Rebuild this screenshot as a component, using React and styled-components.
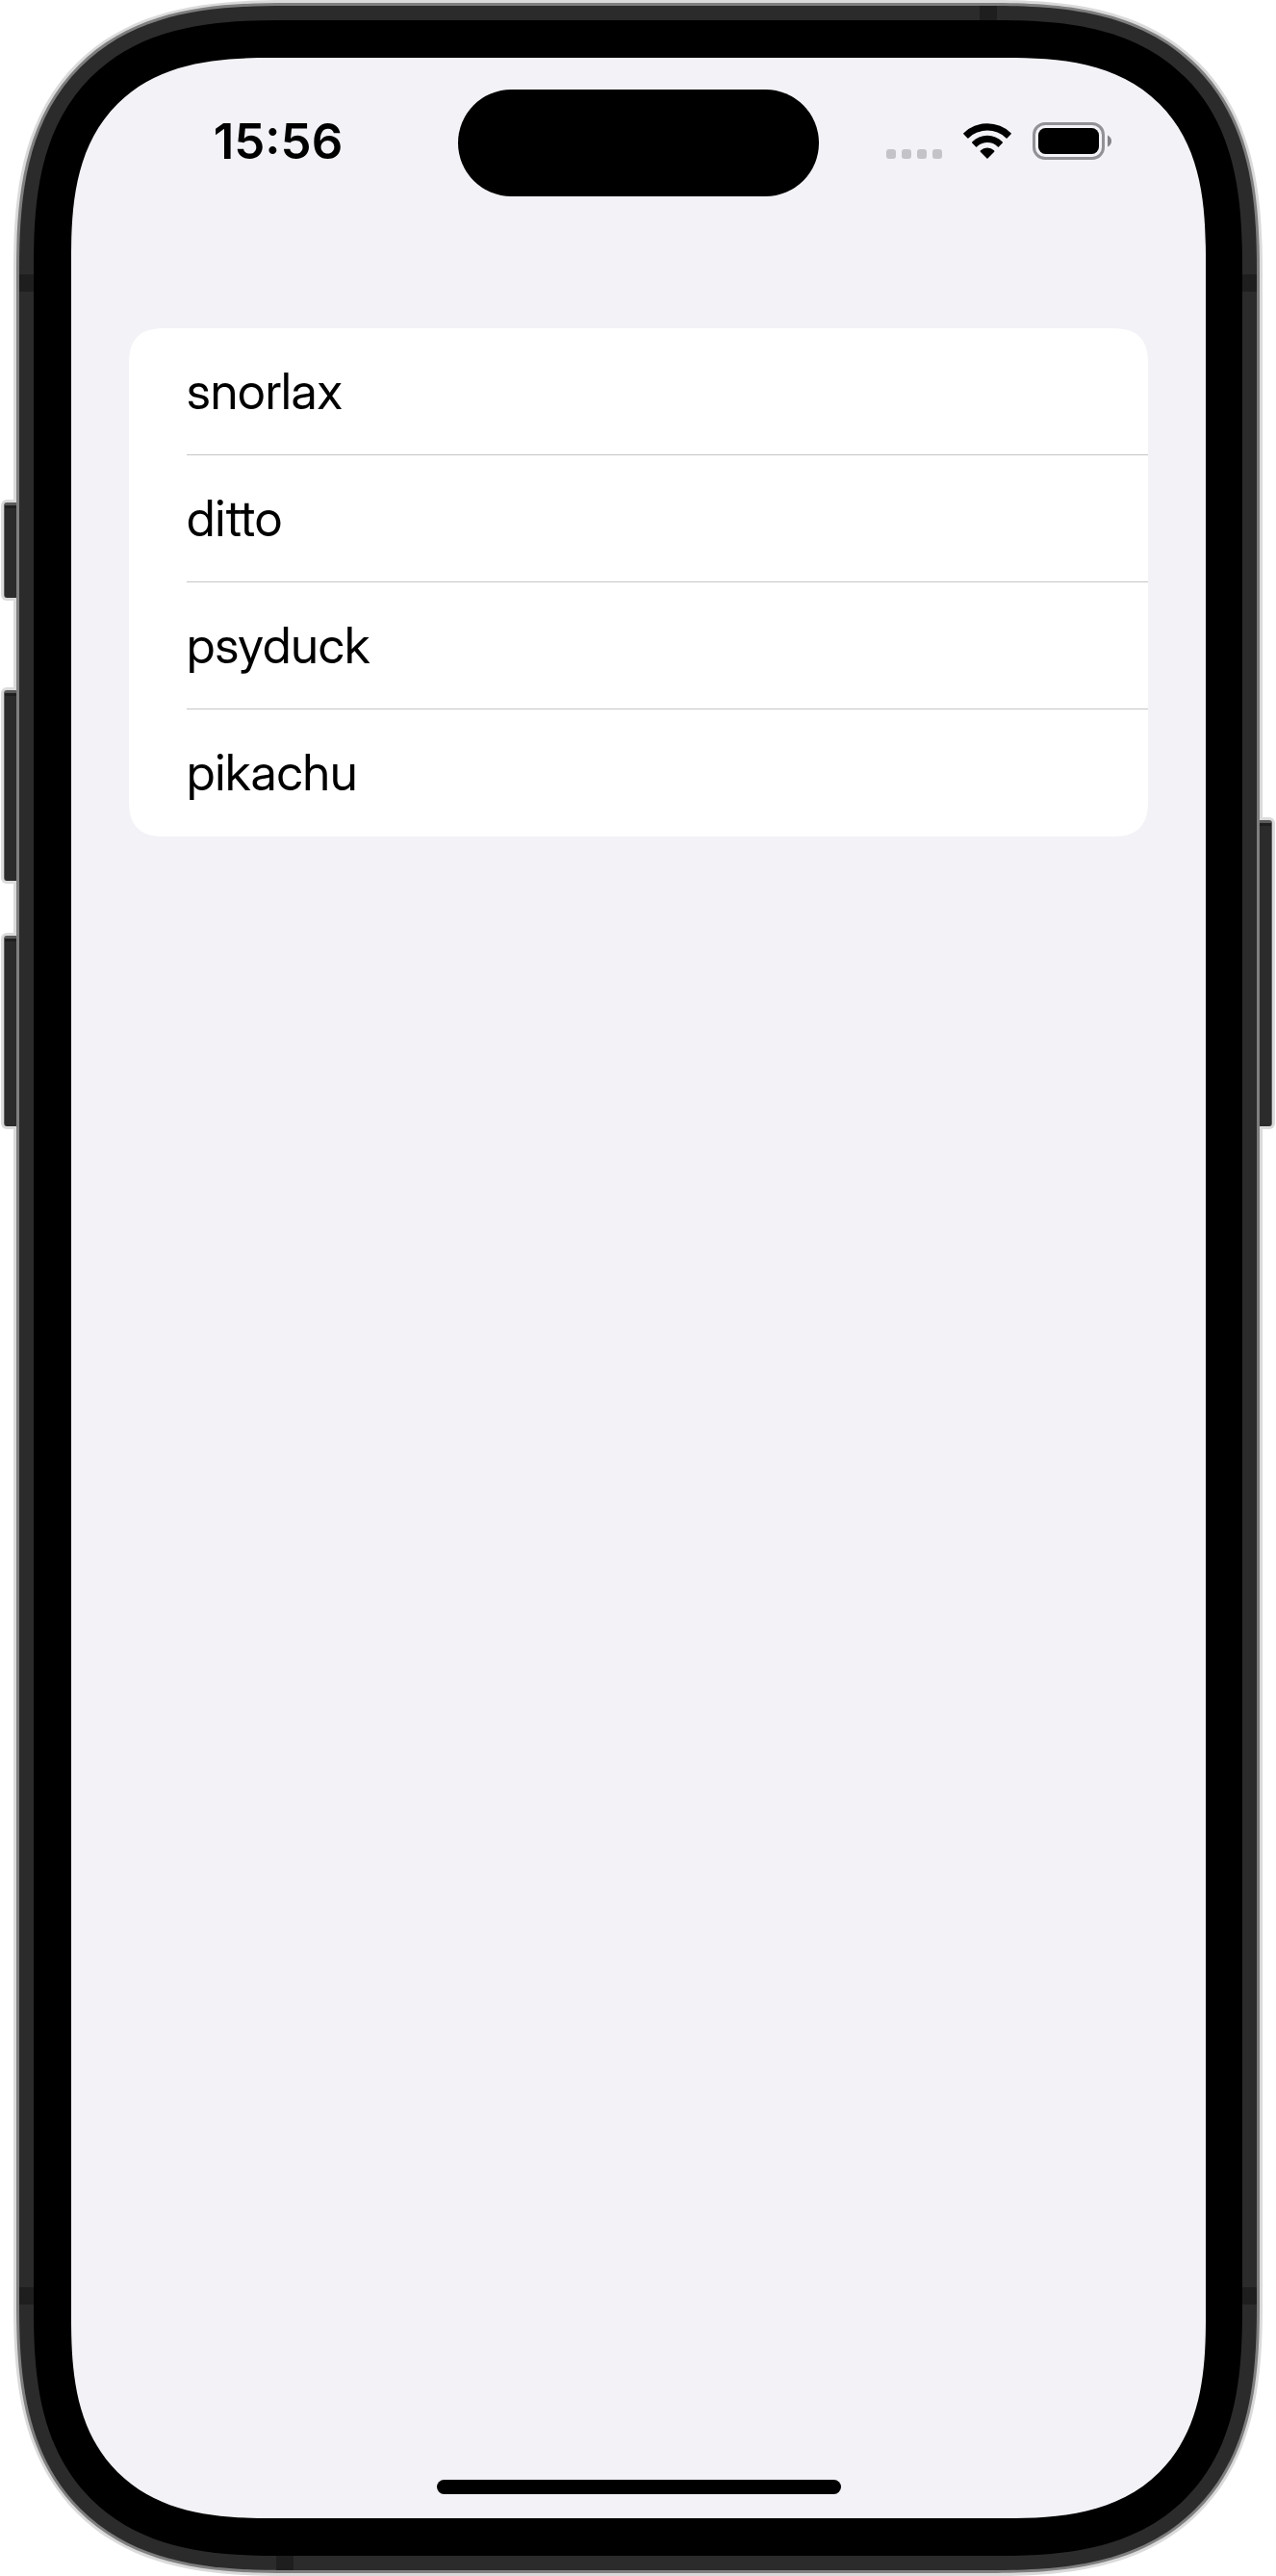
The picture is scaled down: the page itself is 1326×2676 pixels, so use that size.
import React from "react";
import styled, { createGlobalStyle, css } from "styled-components";

const GlobalStyle = createGlobalStyle`
  *, *::before, *::after { box-sizing: border-box; }
  body {
    margin: 0;
    background: #ffffff;
    color: #000000;
    font-family: Inter, "Liberation Sans", sans-serif;
  }
`;

const Stage = styled.div`
  display: flex;
  min-height: 100vh;
  padding: 0 14px;
`;

/* Every shell of the case is the same rounded box, inset by its rim. */
const Shell = styled.div`
  display: flex;
  flex: 1;
  min-width: 0;
  padding: ${(p) => p.$rim};
  border-radius: ${(p) => p.$radius}px;
  background: ${(p) => p.$color};

  @supports (corner-shape: superellipse(1.4)) {
    border-radius: ${(p) => Math.round(p.$radius * 1.26)}px;
    corner-shape: superellipse(1.4);
  }
`;

const Case = styled(Shell)`
  position: relative;
`;

const Screen = styled(Shell).attrs({ as: "main" })`
  flex-direction: column;
`;

const sides = {
  left: css`
    left: -10px;
    border-radius: 3px 0 0 3px;
    border-left: 1px solid #606060;
    clip-path: inset(-3px 0 -3px -3px);
  `,
  right: css`
    right: -10px;
    border-radius: 0 3px 3px 0;
    border-right: 1px solid #606060;
    clip-path: inset(-3px -3px -3px 0);
  `,
};

const SideButton = styled.span`
  position: absolute;
  top: ${(p) => p.$top}px;
  width: 13px;
  height: ${(p) => p.$height}px;
  background: linear-gradient(#5a5a5a 3px, #1f1f1f 3px, #1f1f1f 6px, #2b2b2b 6px);
  box-shadow: 0 0 0 3px #dadbda;
  ${(p) => sides[p.$side]}
`;

const edges = {
  left: css`left: 6px; width: 15px; height: 18px;`,
  right: css`right: 6px; width: 15px; height: 18px;`,
  top: css`top: 6px; right: 276px; width: 18px; height: 15px;`,
  bottom: css`bottom: 6px; left: 273px; width: 18px; height: 15px;`,
};

const Antenna = styled.span`
  position: absolute;
  background: #1e1e1e;
  ${(p) => edges[p.$edge]}
  ${(p) => p.$from === "top" && css`top: 285px;`}
  ${(p) => p.$from === "bottom" && css`bottom: 282px;`}
`;

const StatusBar = styled.header`
  display: grid;
  grid-template-columns: 1fr 375px 1fr;
  align-items: center;
  height: 176px;
`;

const Time = styled.time`
  padding: 0 0 2px 28px;
  text-align: center;
  font-size: 51px;
  line-height: 60px;
  font-weight: 600;
`;

const Island = styled.div`
  height: 111px;
  border-radius: 56px;
  background: #000000;
`;

const Indicators = styled.div`
  display: flex;
  justify-content: flex-end;
  align-items: center;
  gap: 22px;
  padding: 0 98px 3px 0;
`;

const Signal = styled.div`
  display: flex;
  align-self: flex-end;
  gap: 6px;
  padding-bottom: 1px;
`;

const Dot = styled.span`
  width: 10px;
  height: 10px;
  border-radius: 3px;
  background: #c4c3c8;
`;

const Icon = styled.svg`
  display: block;
  flex: none;
`;

const List = styled.ul`
  margin: 105px 60px 0;
  padding: 0 0 0 60px;
  list-style: none;
  border-radius: 30px;
  background: #ffffff;

  @supports (corner-shape: superellipse(1.4)) {
    border-radius: 38px;
    corner-shape: superellipse(1.4);
  }
`;

const Row = styled.li`
  display: flex;
  align-items: center;
  height: 132px;
  font-family: "Inter Display", Inter, "Liberation Sans", sans-serif;
  font-size: 52px;
  line-height: 60px;
  font-variation-settings: "opsz" 32;

  & + & {
    box-shadow: 0 -1px 0 #c6c6c8;
  }
`;

const HomeIndicator = styled.div`
  width: 420px;
  height: 15px;
  margin: auto auto 25px;
  border-radius: 8px;
  background: #000000;
`;

const Wifi = () => (
  <Icon width="50" height="38" viewBox="0 0 50 38" role="img" aria-label="Wi-Fi">
    <path d="M.4 10.2A35.5 35.5 0 0 1 49.6 10.2Q50.2 10.8 49.7 11.3L45.6 15.4Q45.1 15.9 44.6 15.4A28.5 28.5 0 0 0 5.4 15.4Q4.9 15.9 4.4 15.4L.3 11.3Q-.2 10.8 .4 10.2Z" />
    <path d="M9.4 19.2A22.4 22.4 0 0 1 40.6 19.2Q41.3 19.9 40.8 20.4L36.9 24.5Q36.4 25 35.9 24.5A15.6 15.6 0 0 0 14.1 24.5Q13.6 25 13.1 24.5L9.2 20.4Q8.7 19.9 9.4 19.2Z" />
    <path d="M18 28.3A10 10 0 0 1 32 28.3Q32.8 29.1 32.2 29.7L25.5 36.6Q25 37.1 24.5 36.6L17.8 29.7Q17.2 29.1 18 28.3Z" />
  </Icon>
);

const Battery = () => (
  <Icon width="82" height="39" viewBox="0 0 82 39" role="img" aria-label="Battery full">
    <rect x="1.5" y="1.5" width="72" height="36" rx="11.5" fill="none" stroke="#929195" strokeWidth="3" />
    <rect x="6" y="6" width="63" height="27" rx="7.5" />
    <path d="M78 13.4Q82 15.4 82 19.5T78 25.6Z" fill="#858488" />
  </Icon>
);

const names = ["snorlax", "ditto", "psyduck", "pikachu"];

export default function App() {
  return (
    <>
      <GlobalStyle />
      <Stage>
        <Case $rim="3px" $radius={225} $color="#d9dad9">
          <Shell $rim="3px" $radius={222} $color="#7e7f7e">
            <Shell $rim="15px" $radius={219} $color="#2b2b2b">
              <Shell $rim="39px 38px 39px 39px" $radius={204} $color="#000000">
                <Screen $rim="0" $radius={165} $color="#f2f2f7">
                  <StatusBar>
                    <Time dateTime="15:56">15:56</Time>
                    <Island />
                    <Indicators>
                      <Signal role="img" aria-label="No signal">
                        <Dot />
                        <Dot />
                        <Dot />
                        <Dot />
                      </Signal>
                      <Wifi />
                      <Battery />
                    </Indicators>
                  </StatusBar>
                  <List>
                    {names.map((name) => (
                      <Row key={name}>{name}</Row>
                    ))}
                  </List>
                  <HomeIndicator />
                </Screen>
              </Shell>
            </Shell>
          </Shell>
          <SideButton $side="left" $top={522} $height={99} />
          <SideButton $side="left" $top={717} $height={198} />
          <SideButton $side="left" $top={972} $height={198} />
          <SideButton $side="right" $top={852} $height={318} />
          <Antenna $edge="left" $from="top" />
          <Antenna $edge="right" $from="top" />
          <Antenna $edge="left" $from="bottom" />
          <Antenna $edge="right" $from="bottom" />
          <Antenna $edge="top" />
          <Antenna $edge="bottom" />
        </Case>
      </Stage>
    </>
  );
}
